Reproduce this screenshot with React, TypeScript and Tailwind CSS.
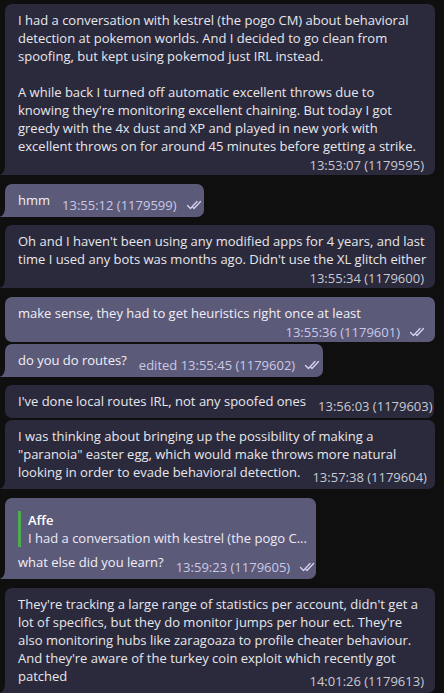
import React from 'react';

type Msg = {
  out: boolean;
  lines: string[];
  time: string;
  inline: boolean;
  tail: boolean;
  width: string;
  mt: string;
  quote?: { name: string; text: string };
};

const messages: Msg[] = [
  {
    out: false,
    lines: [
      'I had a conversation with kestrel (the pogo CM) about behavioral',
      'detection at pokemon worlds. And I decided to go clean from',
      'spoofing, but kept using pokemod just IRL instead.',
      '',
      'A while back I turned off automatic excellent throws due to',
      "knowing they're monitoring excellent chaining. But today I got",
      'greedy with the 4x dust and XP and played in new york with',
      'excellent throws on for around 45 minutes before getting a strike.',
    ],
    time: '13:53:07 (1179595)',
    inline: false,
    tail: true,
    width: 'w-[430px]',
    mt: 'mt-0',
  },
  { out: true, lines: ['hmm'], time: '13:55:12 (1179599)', inline: true, tail: true, width: 'w-[199px]', mt: 'mt-[9px]' },
  {
    out: false,
    lines: [
      "Oh and I haven't been using any modified apps for 4 years, and last",
      "time I used any bots was months ago. Didn't use the XL glitch either",
    ],
    time: '13:55:34 (1179600)',
    inline: false,
    tail: true,
    width: 'w-[430px]',
    mt: 'mt-[8px]',
  },
  {
    out: true,
    lines: ['make sense, they had to get heuristics right once at least'],
    time: '13:55:36 (1179601)',
    inline: false,
    tail: false,
    width: 'w-[430px]',
    mt: 'mt-[9px]',
  },
  { out: true, lines: ['do you do routes?'], time: 'edited 13:55:45 (1179602)', inline: true, tail: true, width: 'w-[318px]', mt: 'mt-[2px]' },
  {
    out: false,
    lines: ["I've done local routes IRL, not any spoofed ones"],
    time: '13:56:03 (1179603)',
    inline: true,
    tail: false,
    width: 'w-[429px]',
    mt: 'mt-[8px]',
  },
  {
    out: false,
    lines: [
      'I was thinking about bringing up the possibility of making a',
      '"paranoia" easter egg, which would make throws more natural',
      'looking in order to evade behavioral detection.',
    ],
    time: '13:57:38 (1179604)',
    inline: true,
    tail: true,
    width: 'w-[430px]',
    mt: 'mt-[2px]',
  },
  {
    out: true,
    lines: ['what else did you learn?'],
    time: '13:59:23 (1179605)',
    inline: true,
    tail: true,
    width: 'w-[311px]',
    mt: 'mt-[9px]',
    quote: { name: 'Affe', text: 'I had a conversation with kestrel (the pogo C...' },
  },
  {
    out: false,
    lines: [
      "They're tracking a large range of statistics per account, didn't get a",
      "lot of specifics, but they do monitor jumps per hour ect. They're",
      'also monitoring hubs like zaragoaza to profile cheater behaviour.',
      "And they're aware of the turkey coin exploit which recently got",
      'patched',
    ],
    time: '14:01:26 (1179613)',
    inline: true,
    tail: true,
    width: 'w-[430px]',
    mt: 'mt-[9px]',
  },
];

const Checks = () => (
  <svg width="17" height="10" viewBox="0 0 17 10" fill="none" stroke="currentColor" strokeWidth="1.3" strokeLinecap="round" strokeLinejoin="round" aria-hidden="true">
    <path d="M1.5 5.5 L4.5 8.5 L11 1.5" />
    <path d="M7 7.5 L8 8.5 L14.5 1.5" />
  </svg>
);

const Tail = ({ out }: { out: boolean }) => (
  <svg className="absolute bottom-0 left-[-6px]" width="6" height="10" viewBox="0 0 6 10" aria-hidden="true">
    <path d="M6 0 V10 H0 C3.5 9.5 6 6.5 6 0 Z" fill={out ? '#5c5a79' : '#2b2a3c'} />
  </svg>
);

const Time = ({ m }: { m: Msg }) => (
  <span className={`flex items-center whitespace-nowrap text-[13px] leading-[16px] ${m.out ? 'text-[#cbc8e6]' : 'text-[#c9c9d2]'}`}>
    {m.time}
    {m.out && (
      <span className="ml-[9px] flex text-[#d6d4ee]">
        <Checks />
      </span>
    )}
  </span>
);

const Bubble = ({ m }: { m: Msg }) => {
  const head = m.inline ? m.lines.slice(0, -1) : m.lines;
  const last = m.lines[m.lines.length - 1];
  return (
    <div
      className={`relative ${m.width} ${m.mt} rounded-[7px] ${m.tail ? 'rounded-bl-none' : ''} pl-[13px] pt-[7px] ${
        m.out ? 'bg-[#5c5a79] pr-[9px] text-[#f1f0f7]' : 'bg-[#2b2a3c] pr-[11px] text-[#e7e7ec]'
      } ${m.inline ? 'pb-[8px]' : 'pb-[2px]'}`}
    >
      {m.quote && (
        <div className="mb-[6px] mt-[6px] border-l-[3px] border-[#4cae4f] pl-[7px]">
          <div className="text-[13px] font-semibold leading-[18px] text-white">{m.quote.name}</div>
          <div className="overflow-hidden whitespace-nowrap text-[13px] leading-[18px] text-[#eceaf6]">{m.quote.text}</div>
        </div>
      )}
      {head.map((l, i) => (
        <div key={i} className="h-[18px] whitespace-nowrap text-[13px] leading-[18px]">
          {l}
        </div>
      ))}
      {m.inline ? (
        <div className="flex items-end">
          <span className="whitespace-nowrap text-[13px] leading-[18px]">{last}</span>
          <span className="ml-auto translate-y-[4px] pl-[12px]">
            <Time m={m} />
          </span>
        </div>
      ) : (
        <div className="mt-[2px] flex h-[16px] justify-end">
          <Time m={m} />
        </div>
      )}
      {m.tail && <Tail out={m.out} />}
    </div>
  );
};

export default function App() {
  return (
    <div className="h-[693px] w-full overflow-hidden bg-[#0f0f10] px-[5px] pt-[4px] font-['Open_Sans',sans-serif]">
      <div className="flex flex-col items-start">
        {messages.map((m, i) => (
          <Bubble key={i} m={m} />
        ))}
      </div>
    </div>
  );
}
